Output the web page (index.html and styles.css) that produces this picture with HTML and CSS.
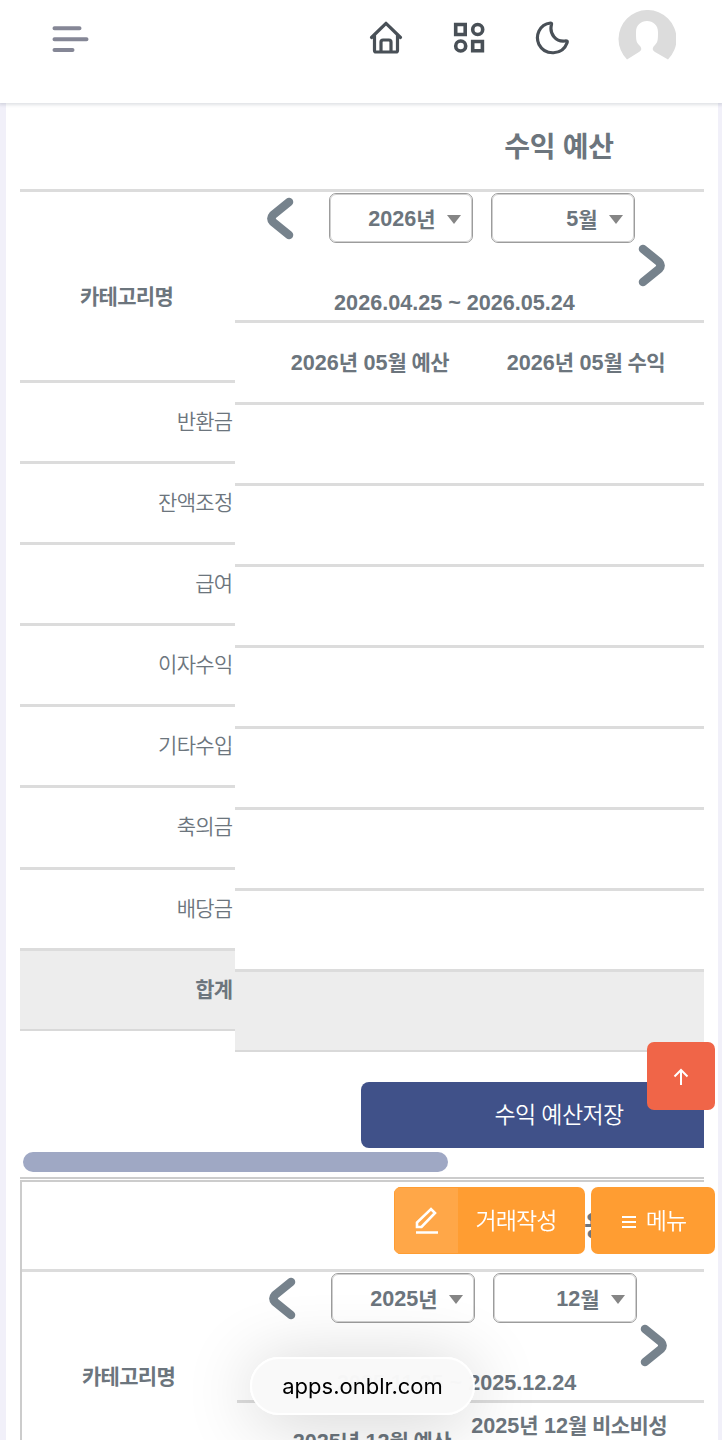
FILE: index.html
```html
<!DOCTYPE html>
<html lang="ko">
<head>
    <meta charset="UTF-8">
    <title>수익 예산</title>
    <link rel="stylesheet" href="styles.css">
</head>
<body>
    <header class="header">
        <svg class="menu-icon" width="38" height="28" viewBox="0 0 38 28"><path d="M3.500 3.300h25M3.500 14.200h32M3.500 25h18"/></svg>
        <nav class="header-nav">
            <svg class="nav-icon" width="36" height="36" viewBox="0 0 36 36"><path d="M2.500 17.500 17 3.300l14.500 14.200M5.500 15.500v15q0 1.500 1.500 1.500h20q1.500 0 1.500-1.500v-15M12 32V22q0-2 2-2h6q2 0 2 2V32"/></svg>
            <svg class="nav-icon nav-icon-bold" width="36" height="36" viewBox="0 0 36 36"><path d="M3.700 4.500h9.500v10H3.700zM20.700 21.500h9.700v9.300h-9.700z"/><circle cx="25.700" cy="9.500" r="5"/><circle cx="8.700" cy="26" r="5"/></svg>
            <svg class="nav-icon" width="36" height="36" viewBox="0 0 36 36"><path d="M15.500 3C4 4.500 0 16 4 24.500c6 11.500 23.500 11 28-1.500.8-2-.3-2.300-2-2C21 22 14 14 16.500 4.300c.2-1-.2-1.300-1-1.300z"/></svg>
            <svg class="avatar" width="58" height="54" viewBox="0 0 58 54"><path d="M9 49.500A29 29 0 1 1 50 49.500L37 42C34 40 34 38 37 35C40 32 40 29 40 22C40 15 35 11 29 11S18 15 18 22C18 29 18 32 21 35C24 38 24 40 21 42Z"/></svg>
        </nav>
    </header>

    <main class="card">
        <section class="budget">
            <h2 class="budget-title">수익 예산</h2>
            <div class="budget-table">
                <div class="category-col">
                    <div class="category-head">카테고리명</div>
                    <div class="category">반환금</div>
                    <div class="category">잔액조정</div>
                    <div class="category">급여</div>
                    <div class="category">이자수익</div>
                    <div class="category">기타수입</div>
                    <div class="category">축의금</div>
                    <div class="category">배당금</div>
                    <div class="category total">합계</div>
                </div>
                <div class="month-col">
                    <div class="month-picker">
                        <div class="picker-row">
                            <svg class="arrow" width="28" height="43" viewBox="0 0 28 43"><path d="M23 5 7 18Q4 21.500 7 25L23 38"/></svg>
                            <div class="select">2026<span class="ko">년</span><i class="caret"></i></div>
                            <div class="select">5<span class="ko">월</span><i class="caret"></i></div>
                        </div>
                        <div class="picker-next">
                            <svg class="arrow" width="28" height="43" viewBox="0 0 28 43"><path d="M5 5 21 18Q24 21.500 21 25L5 38"/></svg>
                        </div>
                        <div class="period">2026.04.25 ~ 2026.05.24</div>
                    </div>
                    <div class="month-head">
                        <div class="head-cell">2026<span class="ko">년</span> 05<span class="ko">월 예산</span></div>
                        <div class="head-cell">2026<span class="ko">년</span> 05<span class="ko">월 수익</span></div>
                    </div>
                    <div class="amount"></div>
                    <div class="amount"></div>
                    <div class="amount"></div>
                    <div class="amount"></div>
                    <div class="amount"></div>
                    <div class="amount"></div>
                    <div class="amount"></div>
                    <div class="amount total"></div>
                </div>
            </div>
            <button class="save-button">수익 예산저장</button>
            <div class="scroll-thumb"></div>
        </section>

        <section class="budget budget-next">
            <div class="bordered">
                <h2 class="budget-title">비소비성 비용 예산</h2>
                <div class="budget-table">
                    <div class="category-col">
                        <div class="category-head">카테고리명</div>
                    </div>
                    <div class="month-col">
                        <div class="month-picker">
                            <div class="picker-row">
                                <svg class="arrow" width="28" height="43" viewBox="0 0 28 43"><path d="M23 5 7 18Q4 21.500 7 25L23 38"/></svg>
                                <div class="select">2025<span class="ko">년</span><i class="caret"></i></div>
                                <div class="select">12<span class="ko">월</span><i class="caret"></i></div>
                            </div>
                            <div class="picker-next">
                                <svg class="arrow" width="28" height="43" viewBox="0 0 28 43"><path d="M5 5 21 18Q24 21.500 21 25L5 38"/></svg>
                            </div>
                            <div class="period">2025.11.25 ~ 2025.12.24</div>
                        </div>
                        <div class="month-head">
                            <div class="head-cell">2025<span class="ko">년</span> 12<span class="ko">월 예산</span></div>
                            <div class="head-cell">2025<span class="ko">년</span> 12<span class="ko">월 비소비성</span></div>
                        </div>
                    </div>
                </div>
            </div>
        </section>
    </main>

    <button class="top-button"><svg width="20" height="20" viewBox="0 0 20 20"><path d="M10 18V3M3.500 9.500 10 3l6.500 6.500"/></svg></button>

    <div class="quick-actions">
        <button class="write-button">
            <span class="write-icon"><svg width="28" height="28" viewBox="0 0 28 28"><path d="M3 25.500h22"/><path d="M4 20v-4.500L18 2l4 4L8.500 20z"/></svg></span>
            <span class="write-label">거래작성</span>
        </button>
        <button class="menu-button"><svg width="16" height="14" viewBox="0 0 16 14"><path d="M1 2h14M1 7h14M1 12h14"/></svg>메뉴</button>
    </div>

    <div class="address-pill">apps.onblr.com</div>
</body>
</html>
```

FILE: styles.css
```css
* {
    box-sizing: border-box;
}

body {
    margin: 0;
    height: 1440px;
    overflow: hidden;
    background-color: #f1f0f9;
    color: #6c757d;
    font-family: 'Liberation Sans', 'Noto Sans CJK KR', sans-serif;
    font-size: 21.6px;
    line-height: 30px;
}

svg {
    display: block;
    fill: none;
    stroke-linecap: round;
    stroke-linejoin: round;
}

button {
    border: none;
    padding: 0;
    color: #fff;
    font-family: 'Noto Sans CJK KR', sans-serif;
}

.header {
    position: relative;
    z-index: 1;
    display: flex;
    justify-content: space-between;
    align-items: flex-start;
    height: 103px;
    padding: 10px 46px 0 51px;
    background-color: #fff;
    box-shadow: 0 1px 3px 1px rgba(50, 60, 80, 0.15);
}

.menu-icon {
    margin-top: 15px;
    stroke: #858796;
    stroke-width: 4;
}

.header-nav {
    display: flex;
}

.nav-icon {
    margin: 10px 47px 0 0;
    stroke: #495057;
    stroke-width: 3.2;
}

.nav-icon-bold {
    stroke-width: 3.6;
    stroke-linejoin: miter;
}

.avatar {
    fill: #dcdcdc;
}

.card {
    width: 712px;
    height: 1337px;
    margin-left: 6px;
    padding: 2px 14px 0;
    overflow: hidden;
    background-color: #fff;
}

.budget {
    width: 684px;
    overflow: hidden;
}

.budget-title {
    width: 1078px;
    height: 84px;
    margin: 0;
    color: #6c757d;
    font-family: 'Noto Sans CJK KR', sans-serif;
    font-size: 28px;
    font-weight: 700;
    letter-spacing: -0.3px;
    line-height: 81px;
    text-align: center;
}

.budget-table {
    display: flex;
    border-top: 3px solid #dcdcdc;
}

.category-col {
    flex: none;
    width: 215px;
    font-family: 'Noto Sans CJK KR', sans-serif;
    font-size: 21px;
    letter-spacing: -0.7px;
}

.category-head {
    height: 188px;
    padding: 88px 2px 0 0;
    font-weight: 700;
    text-align: center;
}

.category {
    height: 81.1px;
    padding: 22px 2.500px 0 0;
    border-top: 3px solid #dcdcdc;
    text-align: right;
    font-weight: 350;
}

.total {
    background-color: #ededed;
    border-bottom: 2px solid #d9d9d9;
    font-weight: 700;
}

.category.total,
.amount.total {
    height: 83px;
}

.month-col {
    flex: 1;
    min-width: 0;
}

.month-picker {
    height: 128px;
    padding-top: 1px;
    font-weight: bold;
}

.picker-row {
    display: flex;
    height: 51px;
    padding-left: 31px;
}

.arrow {
    margin-top: 4px;
    stroke: #76828c;
    stroke-width: 8.5;
}

.select {
    display: flex;
    justify-content: flex-end;
    align-items: center;
    width: 144px;
    height: 50px;
    margin-right: 18px;
    padding: 2px 11px 0 0;
    border: 1.5px solid #9c9c9c;
    outline: 0.5px solid #d0d0d0;
    outline-offset: -2px;
    border-radius: 7px;
    background-color: #fff;
}

.picker-row .arrow {
    margin-right: 35px;
}

.caret {
    margin-left: 12px;
    border: 7.500px solid transparent;
    border-top: 9px solid #858585;
    border-bottom: 0;
}

.picker-next {
    display: flex;
    height: 43px;
    padding-left: 403px;
}

.picker-next .arrow {
    margin-top: 0;
}

.period {
    width: 439px;
    padding-top: 1px;
    text-align: center;
}

.ko {
    font-family: 'Noto Sans CJK KR', sans-serif;
    font-size: 21px;
    font-weight: 700;
    letter-spacing: -0.6px;
    line-height: 20px;
}

.select .ko {
    padding-bottom: 2px;
}

.month-head {
    display: flex;
    height: 81.5px;
    padding-top: 25px;
    border-top: 3px solid #dcdcdc;
    font-weight: bold;
    white-space: nowrap;
}

.head-cell {
    width: 216px;
    padding-right: 2px;
    text-align: right;
}

.amount {
    height: 81.1px;
    border-top: 3px solid #dcdcdc;
}

.save-button {
    display: block;
    width: 396px;
    height: 66px;
    margin: 30px 0 4px 341px;
    padding-bottom: 4px;
    border-radius: 8px;
    background-color: #405189;
    font-size: 23px;
    font-weight: 350;
    letter-spacing: -0.6px;
}

.scroll-thumb {
    width: 425px;
    height: 20px;
    margin-left: 3px;
    border-radius: 10px;
    background-color: #9fa8c4;
}

.budget-next {
    margin-top: 5px;
    padding-top: 1px;
    border-top: 2px solid #ccc;
}

.bordered {
    width: 1080px;
    border: 2px solid #ccc;
}

.budget-next .budget-title {
    height: 87px;
    padding-right: 5px;
    line-height: 84px;
}

.budget-next .month-head {
    align-items: flex-start;
    padding-top: 24px;
}

.budget-next .head-cell + .head-cell {
    margin-top: -16px;
}

.top-button {
    position: fixed;
    left: 647px;
    top: 1042px;
    display: flex;
    justify-content: center;
    align-items: center;
    width: 68px;
    height: 68px;
    border-radius: 7px;
    background-color: #f06548;
}

.top-button svg {
    margin-top: 1px;
    stroke: #fff;
    stroke-width: 2;
    stroke-linecap: butt;
    stroke-linejoin: miter;
}

.quick-actions {
    position: fixed;
    left: 394px;
    top: 1187px;
    display: flex;
    gap: 6px;
}

.write-button,
.menu-button {
    display: flex;
    height: 67px;
    border-radius: 7px;
    background-color: #ff9d32;
    font-size: 23px;
    font-weight: 350;
    letter-spacing: -0.9px;
}

.write-button {
    width: 191px;
    overflow: hidden;
}

.write-icon {
    display: flex;
    justify-content: center;
    align-items: center;
    width: 65px;
    height: 67px;
    border: 1px solid #ff9d32;
    background-color: #ffa748;
}

.write-icon svg {
    stroke: #fff;
    stroke-width: 2.6;
    stroke-linecap: butt;
    stroke-linejoin: miter;
}

.write-label {
    width: 114px;
    line-height: 65px;
}

.menu-button {
    justify-content: center;
    align-items: center;
    gap: 9px;
    width: 124px;
    padding-bottom: 3px;
}

.menu-button svg {
    margin: 6px 0 0 1px;
    stroke: #fff;
    stroke-width: 1.8;
    stroke-linecap: butt;
}

.address-pill {
    position: fixed;
    left: 250px;
    top: 1357px;
    width: 225px;
    height: 58px;
    border: 2px solid #fff;
    border-radius: 29px;
    background-color: rgba(249, 249, 249, 0.98);
    box-shadow: 0 6px 70px rgba(0, 0, 0, 0.19);
    color: #000;
    font-family: Inter, sans-serif;
    font-size: 22px;
    line-height: 54px;
    text-align: center;
}
```
